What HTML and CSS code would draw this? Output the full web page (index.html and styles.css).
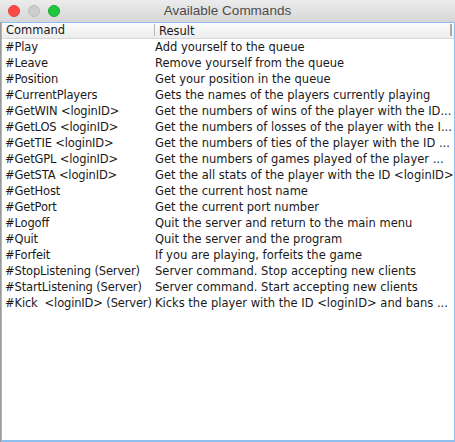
FILE: index.html
```html
<!DOCTYPE html>
<html>
<head>
<meta charset="utf-8">
<link rel="stylesheet" href="styles.css">
</head>
<body>
<div class="window">
  <div class="titlebar">
    <div class="lights">
      <span class="light red"></span>
      <span class="light gray"></span>
      <span class="light green"></span>
    </div>
    <div class="title">Available Commands</div>
  </div>
  <div class="content">
    <div class="table">
      <div class="head">
        <div class="hcell c1">Command</div>
        <div class="hcell c2">Result</div>
        <div class="hcorner"></div>
      </div>
      <div class="body">
        <div class="row"><div class="cell c1">#Play</div><div class="cell c2">Add yourself to the queue</div></div>
        <div class="row"><div class="cell c1">#Leave</div><div class="cell c2">Remove yourself from the queue</div></div>
        <div class="row"><div class="cell c1">#Position</div><div class="cell c2">Get your position in the queue</div></div>
        <div class="row"><div class="cell c1">#CurrentPlayers</div><div class="cell c2">Gets the names of the players currently playing</div></div>
        <div class="row"><div class="cell c1">#GetWIN &lt;loginID&gt;</div><div class="cell c2">Get the numbers of wins of the player with the ID...</div></div>
        <div class="row"><div class="cell c1">#GetLOS &lt;loginID&gt;</div><div class="cell c2">Get the numbers of losses of the player with the I...</div></div>
        <div class="row"><div class="cell c1">#GetTIE &lt;loginID&gt;</div><div class="cell c2">Get the numbers of ties of the player with the ID ...</div></div>
        <div class="row"><div class="cell c1">#GetGPL &lt;loginID&gt;</div><div class="cell c2">Get the numbers of games played of the player ...</div></div>
        <div class="row"><div class="cell c1">#GetSTA &lt;loginID&gt;</div><div class="cell c2">Get the all stats of the player with the ID &lt;loginID&gt;</div></div>
        <div class="row"><div class="cell c1">#GetHost</div><div class="cell c2">Get the current host name</div></div>
        <div class="row"><div class="cell c1">#GetPort</div><div class="cell c2">Get the current port number</div></div>
        <div class="row"><div class="cell c1">#Logoff</div><div class="cell c2">Quit the server and return to the main menu</div></div>
        <div class="row"><div class="cell c1">#Quit</div><div class="cell c2">Quit the server and the program</div></div>
        <div class="row"><div class="cell c1">#Forfeit</div><div class="cell c2">If you are playing, forfeits the game</div></div>
        <div class="row"><div class="cell c1">#StopListening (Server)</div><div class="cell c2">Server command. Stop accepting new clients</div></div>
        <div class="row"><div class="cell c1">#StartListening (Server)</div><div class="cell c2">Server command. Start accepting new clients</div></div>
        <div class="row"><div class="cell c1">#Kick  &lt;loginID&gt; (Server)</div><div class="cell c2">Kicks the player with the ID &lt;loginID&gt; and bans ...</div></div>
      </div>
    </div>
  </div>
</div>
</body>
</html>
```

FILE: styles.css
```css
html, body {
  margin: 0;
  padding: 0;
  background: #ffffff;
}
.window {
  width: 455px;
  height: 442px;
  display: flex;
  flex-direction: column;
  font-family: "DejaVu Sans", "Liberation Sans", sans-serif;
  background: #ececec;
}
.titlebar {
  height: 22px;
  flex: 0 0 22px;
  display: flex;
  align-items: center;
  position: relative;
  background: linear-gradient(#ececec, #d6d6d6);
  box-sizing: border-box;
}
.lights {
  display: flex;
  gap: 8px;
  padding-left: 8px;
}
.light {
  width: 12px;
  height: 12px;
  border-radius: 50%;
  box-sizing: border-box;
}
.light.red { background: #fc4b47; border: 1px solid #e0443e; }
.light.gray { background: #cdcdcd; border: 1px solid #bcbcbc; }
.light.green { background: #1fc73d; border: 1px solid #17ad2c; }
.title {
  position: absolute;
  left: 0;
  right: 0;
  top: 0;
  line-height: 22px;
  text-align: center;
  font-size: 13.5px;
  color: #4d4d4d;
  font-family: "Liberation Sans", "DejaVu Sans", sans-serif;
}
.content {
  flex: 1;
  display: flex;
  box-sizing: border-box;
  border-left: 1px solid #9a9a9a;
  background: #8ebfee;
  padding: 1px 2px 2px 1px;
}
.table {
  flex: 1;
  background: #ffffff;
  display: flex;
  flex-direction: column;
  font-size: 11.5px;
  color: #1a1a1a;
}
.head {
  height: 16px;
  display: flex;
  background: linear-gradient(#fbfbfb, #ececec);
  border-bottom: 1px solid #d8d8d8;
  box-sizing: border-box;
}
.hcell {
  line-height: 16px;
  white-space: pre;
  overflow: hidden;
}
.hcell.c1 {
  width: 148px;
  padding-left: 4px;
  border-right: 1px solid #b8b8b8;
  margin: 1px 0 2px;
  line-height: 13px;
}
.hcell.c2 {
  flex: 1;
  padding-left: 4px;
}
.hcorner {
  width: 2px;
  background: #a8a8a8;
  margin: 1px 2px 2px 0;
}
.row {
  display: flex;
  height: 16px;
  line-height: 16px;
}
.cell {
  white-space: pre;
  overflow: hidden;
}
.cell.c1 {
  width: 149px;
  padding-left: 3px;
  flex: 0 0 auto;
  letter-spacing: -0.15px;
}
.cell.c2 {
  flex: 1;
  padding-left: 1px;
}
```
